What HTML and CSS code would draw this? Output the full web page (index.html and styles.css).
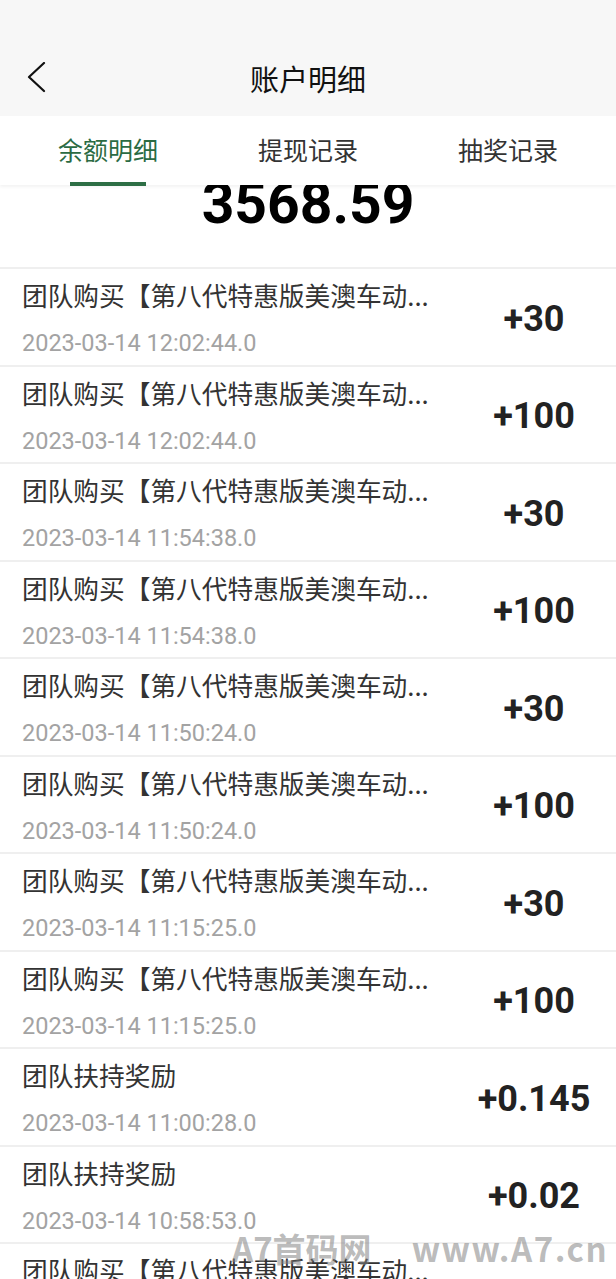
FILE: index.html
```html
<!DOCTYPE html>
<html lang="zh-CN">
<head>
<meta charset="utf-8">
<title>账户明细</title>
<link rel="stylesheet" href="styles.css">
</head>
<body>
<div class="page">
  <header class="header">
    <div class="nav">
      <div class="back">
        <svg width="20" height="32" viewBox="0 0 20 32"><polyline points="17,1 2,15 17,29" fill="none" stroke="#111" stroke-width="2.2" stroke-linecap="round" stroke-linejoin="round"/></svg>
      </div>
      <div class="title">账户明细</div>
      <div class="spacer"></div>
    </div>
  </header>
  <nav class="tabs">
    <div class="tab active"><span>余额明细</span><i class="bar"></i></div>
    <div class="tab"><span>提现记录</span></div>
    <div class="tab"><span>抽奖记录</span></div>
  </nav>
  <section class="balance">3568.59</section>
  <ul class="list">
    <li class="row"><div class="info"><div class="name">团队购买【第八代特惠版美澳车动...</div><div class="date">2023-03-14 12:02:44.0</div></div><div class="amount">+30</div></li>
    <li class="row"><div class="info"><div class="name">团队购买【第八代特惠版美澳车动...</div><div class="date">2023-03-14 12:02:44.0</div></div><div class="amount">+100</div></li>
    <li class="row"><div class="info"><div class="name">团队购买【第八代特惠版美澳车动...</div><div class="date">2023-03-14 11:54:38.0</div></div><div class="amount">+30</div></li>
    <li class="row"><div class="info"><div class="name">团队购买【第八代特惠版美澳车动...</div><div class="date">2023-03-14 11:54:38.0</div></div><div class="amount">+100</div></li>
    <li class="row"><div class="info"><div class="name">团队购买【第八代特惠版美澳车动...</div><div class="date">2023-03-14 11:50:24.0</div></div><div class="amount">+30</div></li>
    <li class="row"><div class="info"><div class="name">团队购买【第八代特惠版美澳车动...</div><div class="date">2023-03-14 11:50:24.0</div></div><div class="amount">+100</div></li>
    <li class="row"><div class="info"><div class="name">团队购买【第八代特惠版美澳车动...</div><div class="date">2023-03-14 11:15:25.0</div></div><div class="amount">+30</div></li>
    <li class="row"><div class="info"><div class="name">团队购买【第八代特惠版美澳车动...</div><div class="date">2023-03-14 11:15:25.0</div></div><div class="amount">+100</div></li>
    <li class="row"><div class="info"><div class="name">团队扶持奖励</div><div class="date">2023-03-14 11:00:28.0</div></div><div class="amount">+0.145</div></li>
    <li class="row"><div class="info"><div class="name">团队扶持奖励</div><div class="date">2023-03-14 10:58:53.0</div></div><div class="amount">+0.02</div></li>
    <li class="row"><div class="info"><div class="name">团队购买【第八代特惠版美澳车动...</div><div class="date">2023-03-14 10:41:12.0</div></div><div class="amount">+30</div></li>
  </ul>
  <div class="watermark"><span class="wm-cn">A7首码网</span><span class="wm-url">www.A7.cn</span></div>
</div>
</body>
</html>
```
FILE: styles.css
```css
* { box-sizing: border-box; }
html, body { margin: 0; padding: 0; }
body {
  background: #fff;
  font-family: "Noto Sans CJK SC", "Noto Sans", sans-serif;
  color: #333;
  width: 616px;
  overflow-x: hidden;
}
.page { position: relative; }

.header {
  background: #f7f7f7;
  padding-top: 40px;
  height: 116px;
}
.nav {
  height: 76px;
  display: grid;
  grid-template-columns: 1fr auto 1fr;
  align-items: center;
}
.back {
  padding-left: 27px;
  display: flex;
  align-items: center;
}
.back svg { display: block; }
.title {
  font-size: 29px;
  color: #111;
  line-height: 40px;
}

.tabs {
  position: relative;
  z-index: 2;
  display: flex;
  height: 69px;
  padding: 0 8px;
  background: #fff;
  box-shadow: 0 2px 3px rgba(0, 0, 0, 0.05);
}
.tab {
  flex: 1;
  display: flex;
  flex-direction: column;
  align-items: center;
  justify-content: flex-end;
  font-size: 25px;
  color: #333;
}
.tab span {
  line-height: 36px;
  margin-bottom: 15px;
}
.tab:not(.active) span { margin-bottom: 18px; }
.tab.active { color: #2b6b43; }
.tab .bar {
  display: block;
  width: 76px;
  height: 4px;
  background: #2d6e45;
  margin-bottom: -1px;
}

.balance {
  position: relative;
  z-index: 1;
  margin-top: -9px;
  padding-bottom: 35px;
  text-align: center;
  font-family: Roboto, "Liberation Sans", sans-serif;
  font-weight: 700;
  font-size: 57px;
  line-height: 56px;
  color: #000;
}

.list {
  list-style: none;
  margin: 0;
  padding: 0;
}
.row {
  display: flex;
  align-items: center;
  height: 97.5px;
  border-top: 2px solid #efefef;
  padding-left: 22px;
}
.info {
  flex: 1;
  min-width: 0;
  display: flex;
  flex-direction: column;
  gap: 15px;
  align-self: flex-start;
  padding-top: 8px;
}
.name {
  font-size: 25.7px;
  line-height: 36px;
  color: #333;
  white-space: nowrap;
}
.date {
  font-family: Roboto, "Liberation Sans", sans-serif;
  font-size: 23.5px;
  line-height: 30px;
  color: #a3a3a3;
}
.amount {
  width: 164px;
  text-align: center;
  font-family: Roboto, "Liberation Sans", sans-serif;
  font-weight: 700;
  font-size: 36px;
  color: #222;
  padding-top: 4px;
}

.watermark {
  position: absolute;
  left: 232px;
  top: 1228px;
  display: flex;
  gap: 40px;
  font-family: "Noto Sans CJK SC", sans-serif;
  font-weight: 700;
  font-size: 33px;
  line-height: 40px;
  color: rgba(130, 130, 130, 0.55);
  pointer-events: none;
}
.wm-url { letter-spacing: 1.5px; }
```
